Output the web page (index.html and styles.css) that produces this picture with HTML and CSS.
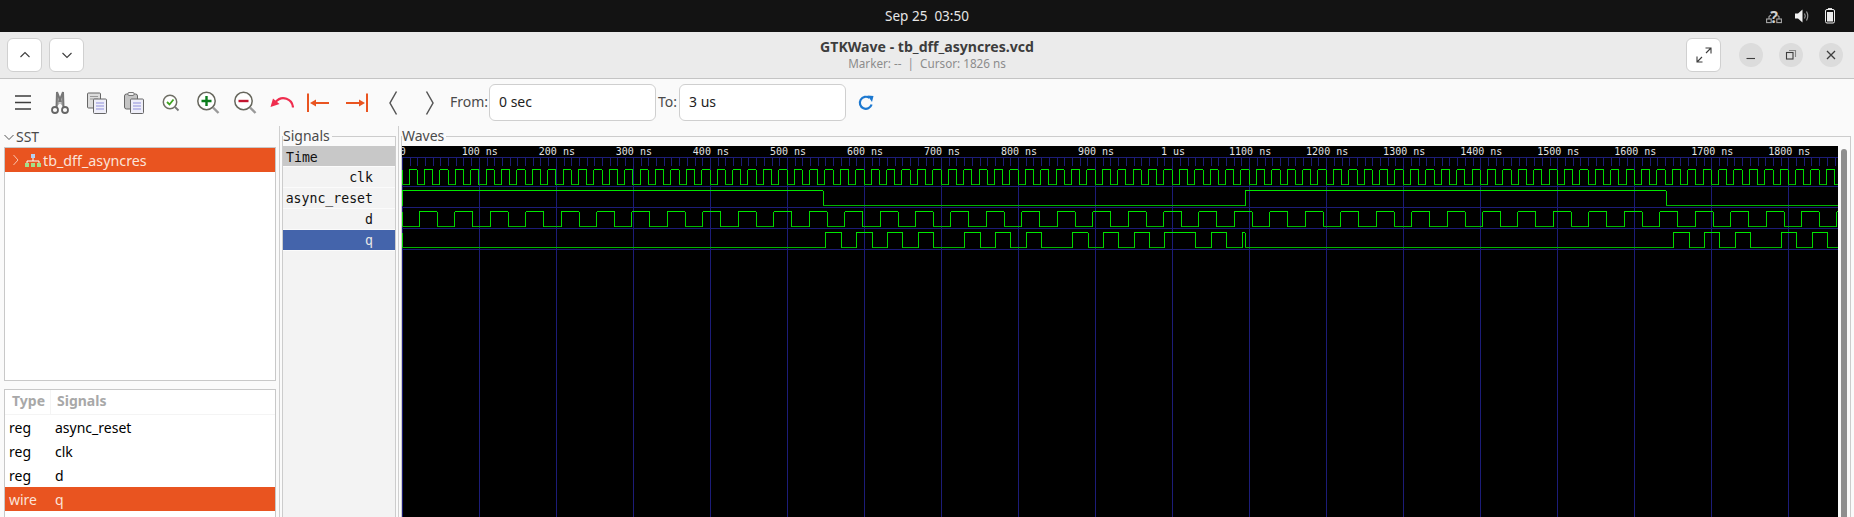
FILE: index.html
```html
<!DOCTYPE html>
<html lang="en">

<head>
    <meta charset="UTF-8">
    <title>GTKWave - tb_dff_asyncres.vcd</title>
    <link rel="stylesheet" href="styles.css">
</head>

<body>
    <div class="topbar">
        <div></div>
        <div class="clock">Sep 25&nbsp; 03:50</div>
        <div class="tray">
            <svg width="16" height="16" viewBox="0 0 16 16" fill="none" stroke="#a8a8a8" stroke-width="1.1">
                <rect x="0.6" y="11" width="4.6" height="3.6" />
                <rect x="10.8" y="11" width="4.6" height="3.6" />
                <path d="M3 11 V8.5 L5 7 M13 11 V8.5 L11.5 7.5" />
                <text x="8" y="15" class="tray-q">?</text>
            </svg>
            <svg width="16" height="16" viewBox="0 0 16 16">
                <path d="M1 5.5 H4 L8.5 1.5 V14.5 L4 10.5 H1 Z" fill="#f2f2f2" />
                <path d="M10.5 5.5 Q12 8 10.5 10.5 M12.5 3.5 Q15 8 12.5 12.5" fill="none" stroke="#999" stroke-width="1.2" />
            </svg>
            <svg width="16" height="16" viewBox="0 0 16 16">
                <rect x="6" y="0" width="4" height="2" fill="#ddd" />
                <rect x="3.5" y="1.5" width="9" height="13.5" rx="1.5" fill="none" stroke="#eee" stroke-width="1" />
                <rect x="5" y="4" width="6" height="9.5" fill="#eee" />
            </svg>
        </div>
    </div>

    <div class="titlebar">
        <div class="title-left">
            <button class="hdr-btn">
                <svg width="16" height="16" viewBox="0 0 16 16" fill="none" stroke="#3d3d3d" stroke-width="1.1"><path d="M3.5 10 L8 5.5 L12.5 10" /></svg>
            </button>
            <button class="hdr-btn">
                <svg width="16" height="16" viewBox="0 0 16 16" fill="none" stroke="#3d3d3d" stroke-width="1.1"><path d="M3.5 6 L8 10.5 L12.5 6" /></svg>
            </button>
        </div>
        <div class="title-center">
            <div class="title-main">GTKWave - tb_dff_asyncres.vcd</div>
            <div class="title-sub">Marker: -- &nbsp;|&nbsp; Cursor: 1826 ns</div>
        </div>
        <div class="title-right">
            <button class="hdr-btn">
                <svg width="18" height="18" viewBox="0 0 18 18" fill="none" stroke="#3d3d3d" stroke-width="1.1"><path d="M2 16 L7 11 M11 7 L16 2 M10.5 2 H16 V7.5 M2 10.5 V16 H7.5" /></svg>
            </button>
            <div class="win-btns">
                <div class="win-btn"><svg width="12" height="12" viewBox="0 0 12 12" fill="none" stroke="#3d3d3d" stroke-width="1.1"><path d="M1.5 9.5 H10" /></svg></div>
                <div class="win-btn"><svg width="12" height="12" viewBox="0 0 12 12" fill="none" stroke="#3d3d3d" stroke-width="1.1"><rect x="1.5" y="3.5" width="6.5" height="6.5" /><path d="M4 1.5 H10.5 V8" stroke="#888" /></svg></div>
                <div class="win-btn"><svg width="12" height="12" viewBox="0 0 12 12" fill="none" stroke="#3d3d3d" stroke-width="1.3"><path d="M2 2 L10 10 M10 2 L2 10" /></svg></div>
            </div>
        </div>
    </div>

    <div class="toolbar">
        <div class="tool">
            <svg width="24" height="24" viewBox="0 0 24 24" stroke="#3d3d3d" stroke-width="1.5"><path d="M4 5 H20 M4 11.5 H20 M4 18 H20" /></svg>
        </div>
        <div class="tool">
            <svg width="24" height="24" viewBox="0 0 24 24" fill="none">
                <path d="M8.5 16 L9 1 L13 11 M15.5 16 L15 1 L11 11" stroke="#777" stroke-width="2" fill="#aaa" />
                <circle cx="7" cy="19" r="3" stroke="#666" stroke-width="1.8" />
                <circle cx="17" cy="19" r="3" stroke="#666" stroke-width="1.8" />
            </svg>
        </div>
        <div class="tool">
            <svg width="24" height="24" viewBox="0 0 24 24">
                <rect x="2.5" y="2" width="13" height="15" rx="1" fill="#dcdcdc" stroke="#666" />
                <path d="M5 5.5 H13 M5 8 H13" stroke="#999" />
                <rect x="8.5" y="8" width="13" height="14.5" rx="1" fill="#eeeef8" stroke="#666" />
                <path d="M11 12 H19 M11 15 H19 M11 18 H19" stroke="#8f8fdc" />
            </svg>
        </div>
        <div class="tool">
            <svg width="24" height="24" viewBox="0 0 24 24">
                <rect x="2.5" y="3" width="13" height="15" rx="2" fill="#c4c4c4" stroke="#666" />
                <rect x="6" y="1.5" width="6" height="3" rx="1" fill="#eee" stroke="#777" />
                <rect x="8.5" y="8" width="13" height="14.5" rx="1" fill="#eeeef8" stroke="#666" />
                <path d="M11 12 H19 M11 15 H19 M11 18 H19" stroke="#8f8fdc" />
            </svg>
        </div>
        <div class="tool">
            <svg width="24" height="24" viewBox="0 0 24 24" fill="none">
                <circle cx="11" cy="11" r="6.7" fill="#fff" stroke="#6e6e64" stroke-width="1.5" />
                <path d="M8 11 L10.5 13.5 L14.5 8.5" stroke="#3fa320" stroke-width="1.8" />
                <path d="M16 16 L19.5 19.5" stroke="#777" stroke-width="1.8" />
            </svg>
        </div>
        <div class="tool">
            <svg width="24" height="24" viewBox="0 0 24 24" fill="none">
                <circle cx="10.5" cy="10" r="8.7" fill="#fff" stroke="#66665c" stroke-width="1.5" />
                <path d="M5.5 10 H15.5 M10.5 5 V15" stroke="#0b7d1c" stroke-width="2.4" />
                <path d="M17 16.5 L22.5 22" stroke="#999" stroke-width="2.4" />
            </svg>
        </div>
        <div class="tool">
            <svg width="24" height="24" viewBox="0 0 24 24" fill="none">
                <circle cx="10.5" cy="10" r="8.7" fill="#fff" stroke="#66665c" stroke-width="1.5" />
                <path d="M5.5 10 H15.5" stroke="#c3152f" stroke-width="2.4" />
                <path d="M17 16.5 L22.5 22" stroke="#999" stroke-width="2.4" />
            </svg>
        </div>
        <div class="tool">
            <svg width="24" height="24" viewBox="0 0 24 24" fill="none">
                <path d="M23 16.5 C22.5 8 12 3.5 5.5 11" stroke="#ef2d4e" stroke-width="2.2" />
                <path d="M0.5 16 L3 7.5 L9.5 13 Z" fill="#ef2d4e" />
            </svg>
        </div>
        <div class="tool">
            <svg width="24" height="24" viewBox="0 0 24 24" fill="none">
                <path d="M1 2.5 V21" stroke="#e95420" stroke-width="2" />
                <path d="M8 12 H22" stroke="#e95420" stroke-width="2" />
                <path d="M3 12 L9 8.5 V15.5 Z" fill="#e95420" />
            </svg>
        </div>
        <div class="tool">
            <svg width="24" height="24" viewBox="0 0 24 24" fill="none">
                <path d="M23 2.5 V21" stroke="#e95420" stroke-width="2" />
                <path d="M2 12 H16" stroke="#e95420" stroke-width="2" />
                <path d="M21 12 L15 8.5 V15.5 Z" fill="#e95420" />
            </svg>
        </div>
        <div class="tool">
            <svg width="24" height="24" viewBox="0 0 24 24" fill="none" stroke="#555" stroke-width="1.5"><path d="M15.5 0.5 L9 12 L15.5 23.5" /></svg>
        </div>
        <div class="tool">
            <svg width="24" height="24" viewBox="0 0 24 24" fill="none" stroke="#555" stroke-width="1.5"><path d="M8.5 0.5 L15 12 L8.5 23.5" /></svg>
        </div>
        <label class="range-label from-label">From:</label>
        <input class="range-input" type="text" value="0 sec">
        <label class="range-label to-label">To:</label>
        <input class="range-input" type="text" value="3 us">
        <svg class="refresh" width="16" height="16" viewBox="0 0 16 16" fill="none">
            <path d="M13.6 9.5 A6 6 0 1 1 11.5 3" stroke="#1c78d0" stroke-width="2.2" />
            <path d="M9.5 0.5 L15.5 1 L14 7 Z" fill="#1c78d0" />
        </svg>
    </div>

    <div class="panes">
        <div class="left-pane">
            <div class="sst-head">
                <svg width="10" height="10" viewBox="0 0 10 10" fill="none" stroke="#555" stroke-width="1"><path d="M0.5 3 L5 7.5 L9.5 3" /></svg>
                <span>SST</span>
            </div>
            <div class="tree-box">
                <div class="tree-row">
                    <svg class="tree-arrow" width="6" height="12" viewBox="0 0 6 12" fill="none" stroke="#f8c4ae" stroke-width="1"><path d="M0.5 1 L5 6 L0.5 11" /></svg>
                    <svg class="tree-icon" width="16" height="13" viewBox="0 0 16 13">
                        <rect x="6" y="0" width="4" height="4" fill="#b4d0f0" />
                        <path d="M8 4 V7 M2 9 V7 H14 V9" stroke="#fff" fill="none" />
                        <rect x="0" y="9" width="4" height="4" fill="#a4e08a" />
                        <rect x="6" y="9" width="4" height="4" fill="#a4e08a" />
                        <rect x="12" y="9" width="4" height="4" fill="#a4e08a" />
                    </svg>
                    <span>tb_dff_asyncres</span>
                </div>
            </div>
            <div class="sig-box">
                <div class="sig-head">
                    <div class="col-type">Type</div>
                    <div class="col-name">Signals</div>
                </div>
                <div class="sig-row"><div class="col-type">reg</div><div class="col-name">async_reset</div></div>
                <div class="sig-row"><div class="col-type">reg</div><div class="col-name">clk</div></div>
                <div class="sig-row"><div class="col-type">reg</div><div class="col-name">d</div></div>
                <div class="sig-row selected"><div class="col-type">wire</div><div class="col-name">q</div></div>
            </div>
        </div>

        <fieldset class="frame signals-frame">
            <legend>Signals</legend>
            <div class="trace time">Time</div>
            <div class="trace">clk</div>
            <div class="trace">async_reset</div>
            <div class="trace">d</div>
            <div class="trace active">q</div>
            <div class="trace-rest"></div>
        </fieldset>

        <div class="pane-sep"></div>

        <fieldset class="frame waves-frame">
            <legend>Waves</legend>
            <div class="waves-body">
                <svg id="waves" width="1436" height="371" viewBox="0 0 1436 371"></svg>
                <div class="scroll"><div class="thumb"></div></div>
            </div>
        </fieldset>
    </div>

    <script src="waves.js"></script>
</body>

</html>
```

FILE: styles.css
```css
body {
    margin: 0;
    width: 1854px;
    height: 517px;
    overflow: hidden;
    font-family: "Noto Sans", sans-serif;
    background-color: #fafafa;
    display: flex;
    flex-direction: column;
}

.topbar {
    height: 32px;
    flex: none;
    background-color: #131313;
    display: grid;
    grid-template-columns: 1fr auto 1fr;
    align-items: center;
}

.clock {
    color: #e6e6e6;
    font-size: 13.5px;
}

.tray {
    display: flex;
    justify-content: flex-end;
    gap: 12px;
    padding-right: 16px;
}

.tray svg {
    overflow: visible;
}

.tray-q {
    font-family: "Noto Sans", sans-serif;
    font-size: 16px;
    font-weight: bold;
    fill: #d0d0d0;
    stroke: none;
    text-anchor: middle;
}

.titlebar {
    height: 47px;
    flex: none;
    box-sizing: border-box;
    padding-top: 6px;
    background-color: #ebebeb;
    border-bottom: 1px solid #c4c4c4;
    display: grid;
    grid-template-columns: 1fr auto 1fr;
}

.title-left {
    display: flex;
    gap: 7px;
    padding-left: 7px;
}

.title-center {
    text-align: center;
    margin-top: -1px;
}

.title-main {
    font-size: 14.1px;
    font-weight: 700;
    line-height: 19px;
    color: #3d3d3d;
}

.title-sub {
    font-size: 11.7px;
    line-height: 14px;
    color: #8c8c8c;
}

.title-right {
    display: flex;
    justify-content: flex-end;
    padding-right: 11px;
}

.hdr-btn {
    width: 35px;
    height: 34px;
    padding: 0;
    background: white;
    border: 1px solid #d0d0d0;
    border-radius: 6px;
    display: flex;
    align-items: center;
    justify-content: center;
}

.win-btns {
    display: flex;
    gap: 16px;
    margin-left: 18px;
    padding-top: 5px;
}

.win-btn {
    width: 24px;
    height: 24px;
    border-radius: 50%;
    background-color: #dcdcdc;
    display: flex;
    align-items: center;
    justify-content: center;
}

.toolbar {
    height: 47px;
    flex: none;
    padding-left: 4.5px;
    display: flex;
    align-items: center;
    background-color: #fafafa;
}

.tool {
    width: 37px;
    display: flex;
    justify-content: center;
}

.range-label {
    font-size: 14px;
    line-height: 18px;
    padding-bottom: 2px;
    color: #4a4a4a;
}

.from-label {
    margin-left: 1.5px;
    width: 39px;
}

.to-label {
    margin-left: 2px;
    width: 21px;
}

.range-input {
    box-sizing: border-box;
    width: 167px;
    height: 37px;
    padding: 0 9px 2px;
    font-family: "Noto Sans", sans-serif;
    font-size: 14px;
    color: #222;
    background: white;
    border: 1px solid #cfcfcf;
    border-radius: 6px;
}

.refresh {
    margin-left: 12px;
}

.panes {
    flex: 1;
    min-height: 0;
    display: flex;
    overflow: hidden;
}

.left-pane {
    width: 280px;
    flex: none;
    box-sizing: border-box;
    padding-left: 4px;
    border-right: 1px solid #cfcfcf;
}

.sst-head {
    height: 21px;
    display: flex;
    align-items: center;
    gap: 2px;
    font-size: 14px;
    color: #4a4a4a;
}

.tree-box {
    box-sizing: border-box;
    width: 272px;
    height: 234px;
    background: white;
    border: 1px solid #c8c8c8;
}

.tree-row {
    height: 24px;
    padding-left: 8px;
    display: flex;
    align-items: center;
    background-color: #e95420;
    color: #fbe3d9;
    font-size: 14.3px;
}

.tree-icon {
    margin: 0 2px 0 6px;
}

.sig-box {
    box-sizing: border-box;
    width: 272px;
    height: 140px;
    margin-top: 8px;
    background: white;
    border: 1px solid #c8c8c8;
    font-size: 14px;
}

.sig-head, .sig-row {
    height: 24px;
    display: flex;
    align-items: center;
}

.sig-head {
    font-weight: 700;
    color: #a8a8a8;
    border-bottom: 1px solid #f4f4f4;
}

.sig-head .col-type {
    padding-left: 7px;
    width: 38px;
    border-right: 1px solid #f4f4f4;
    line-height: 22px;
    padding-bottom: 2px;
}

.sig-head .col-name {
    padding-left: 6px;
    line-height: 22px;
    padding-bottom: 2px;
}

.sig-row .col-type {
    padding-left: 4px;
    width: 46px;
}

.sig-row.selected {
    background-color: #e95420;
    color: #fbe3d9;
}

.frame {
    margin: 0;
    padding: 0;
    height: 420px;
    background: transparent;
    border: 1px solid #cccccc;
    box-sizing: border-box;
    min-width: 0;
}

.frame legend {
    padding: 0 2px 0 0;
    height: 20px;
    line-height: 20px;
    font-size: 14px;
    color: #4a4a4a;
}

.signals-frame {
    width: 114px;
    flex: none;
    margin-left: 2px;
}

.pane-sep {
    width: 1px;
    flex: none;
    margin-left: 2px;
    background-color: #cfcfcf;
}

.trace {
    box-sizing: border-box;
    height: 21px;
    padding-top: 1px;
    padding-right: 22px;
    text-align: right;
    font-family: "DejaVu Sans Mono", monospace;
    font-size: 13.2px;
    line-height: 20px;
    color: #111;
    background-color: #f3f3f3;
    border-bottom: 1px solid #fbfbfb;
}

.trace.time {
    text-align: left;
    padding-top: 2px;
    padding-left: 3px;
    background-color: #c8c8c8;
}

.trace.active {
    background-color: #4464ab;
    color: #e8e8e8;
}

.trace-rest {
    height: 300px;
    background-color: #f3f3f3;
}

.waves-frame {
    width: 1450px;
    flex: none;
    margin-left: 2px;
}

.waves-body {
    display: flex;
}

#waves {
    display: block;
    flex: none;
    background-color: black;
}

#waves text {
    font-family: "DejaVu Sans Mono", monospace;
    font-size: 10px;
    fill: #e4e4e4;
    text-anchor: middle;
}

.scroll {
    width: 12px;
    flex: none;
    box-sizing: border-box;
    padding: 3px 3px 0;
    background-color: #fafafa;
}

.thumb {
    height: 400px;
    background-color: #8e8e8e;
    border-radius: 3px;
}
```

FILE: waves.js
```js
// x position of a time (ns) inside the wave canvas
const T0 = 0.3;
const SCALE = 0.7703;
const CANVAS_TOP = 146;

const svg = document.getElementById("waves");
let out = "";

function px(v) {
    return Math.floor(v) + 0.5;
}

function line(x1, y1, x2, y2, color) {
    out += `<line x1="${x1}" y1="${y1}" x2="${x2}" y2="${y2}" stroke="${color}" shape-rendering="crispEdges"/>`;
}

// ruler and grid
const NAVY = "#1c1c78";
line(0, px(157 - CANVAS_TOP), 1436, px(157 - CANVAS_TOP), NAVY);
for (let i = 0; i <= 186; i++) {
    const x = px(T0 + i * 10 * SCALE);
    if (i % 10 === 0) {
        line(x, 11, x, 371, NAVY);
    } else {
        line(x, 11, x, 20, NAVY);
    }
}
for (let i = 0; i <= 18; i++) {
    const x = T0 + i * 100 * SCALE + 0.5;
    let label = (i * 100) + " ns";
    if (i === 0) label = "0";
    if (i === 10) label = "1 us";
    out += `<text x="${x}" y="9">${label}</text>`;
}

// row separators
[186, 207, 228, 249].forEach(y => line(0, px(y - CANVAS_TOP), 1436, px(y - CANVAS_TOP), NAVY));

const HIGH = "#00e800";
const LOW = "#00b400";
const EDGE = "#00d800";

// edges are absolute page x values, every edge toggles the level
function wave(hi, lo, startHigh, edges) {
    const yHi = px(hi - CANVAS_TOP);
    const yLo = px(lo - CANVAS_TOP);
    let level = startHigh;
    let x = 402;
    line(0.5, yHi, 0.5, yLo, EDGE);
    edges.concat([1838]).forEach((edge, i, all) => {
        const e = Math.min(edge, 1838) - 402;
        const from = x === 402 ? 0 : x - 402;
        line(from, level ? yHi : yLo, e, level ? yHi : yLo, level ? HIGH : LOW);
        if (i < all.length - 1) line(px(e), yHi, px(e), yLo, EDGE);
        level = !level;
        x = edge;
    });
}

function series(firstRise, firstFall, period) {
    const edges = [];
    for (let n = 0; ; n++) {
        const r = firstRise + period * n;
        const f = firstFall + period * n;
        if (r >= 1838) break;
        edges.push(r);
        if (f < 1838) edges.push(f);
    }
    return edges;
}

wave(169, 184, false, series(409, 417.3, 15.406));
wave(190, 205, true, [823.3, 1245.3, 1666.3]);
wave(211, 226, false, series(419.3, 437.3, 35.44));
wave(232, 247, false, [
    825.3, 841.7, 856.3, 872.7, 887.3, 902.7, 918.3, 933.7, 964.3, 980.7,
    995.3, 1010.7, 1026.3, 1041.7, 1072.3, 1088, 1103.3, 1118.7, 1134.3, 1149.7,
    1164.3, 1195.7, 1211.3, 1226.7, 1242.3, 1245.3,
    1673.3, 1689.7, 1704.3, 1719.7, 1735.3, 1750.7, 1781.3, 1796.7, 1812.3, 1827.7
]);

svg.innerHTML = out;
```
